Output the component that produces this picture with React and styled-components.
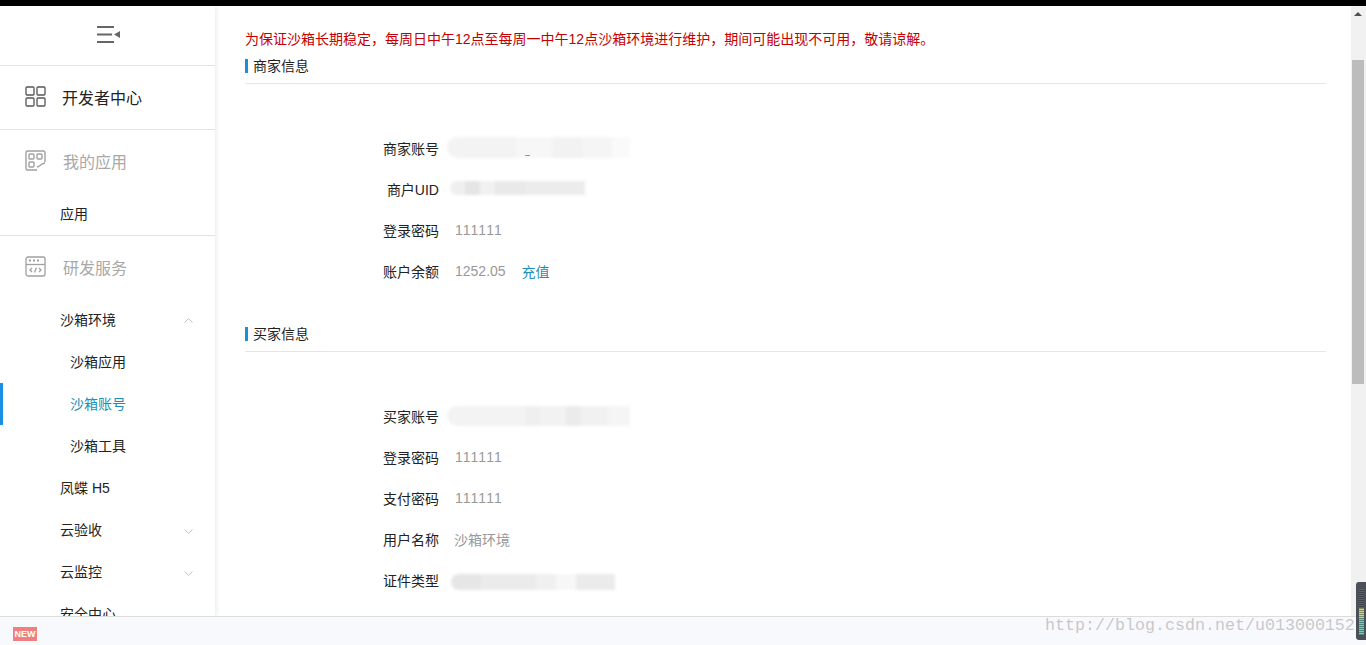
import styled, { createGlobalStyle } from 'styled-components';

const GlobalStyle = createGlobalStyle`
    html, body {
        margin: 0;
        padding: 0;
        background: #fff;
        overflow: hidden;
    }
    * {
        box-sizing: border-box;
    }
`;

const Page = styled.div`
    position: relative;
    display: flex;
    flex-direction: column;
    width: 1366px;
    height: 645px;
    overflow: hidden;
    font-family: 'Liberation Sans', 'Noto Sans CJK SC', sans-serif;
    font-size: 14px;
    font-kerning: none;
    color: #222;
`;

const TopBar = styled.div`
    flex: none;
    height: 6px;
    background: #000;
`;

const Body = styled.div`
    flex: 1;
    display: flex;
    min-height: 0;
`;

const Sidebar = styled.aside`
    flex: none;
    width: 215px;
    overflow: hidden;
    background: #fff;
    box-shadow: 2px 0 4px rgba(0, 0, 0, 0.07);
`;

const Collapse = styled.div`
    display: flex;
    align-items: center;
    justify-content: center;
    height: 60px;
    padding: 0 0 2px 2px;
    border-bottom: 1px solid #e2e2e2;
`;

const GroupHead = styled.div`
    display: flex;
    align-items: center;
    gap: ${(props) => (props.$dark ? '16px' : '17px')};
    height: ${(props) => (props.$dark ? '64px' : '63px')};
    padding: 0 0 2px 25px;
    font-size: 16px;
    color: ${(props) => (props.$dark ? '#222' : '#a8a8a8')};
    border-bottom: ${(props) => (props.$line ? '1px solid #e2e2e2' : 'none')};
`;

const NavItem = styled.div`
    position: relative;
    display: flex;
    align-items: center;
    justify-content: space-between;
    height: 42px;
    padding: 0 22px 2px ${(props) => (props.$sub ? '70px' : '60px')};
    color: ${(props) => (props.$active ? '#1b8fb8' : '#222')};
    ${(props) => props.$active && 'box-shadow: inset 3px 0 0 #1a8fe3;'}
    ${(props) => props.$line && 'height: 43px; padding-bottom: 3px; border-bottom: 1px solid #e2e2e2;'}
`;

const Main = styled.main`
    flex: 1;
    min-width: 0;
    overflow: hidden;
    padding: 23px 25px 0 30px;
`;

const Notice = styled.div`
    height: 20px;
    line-height: 20px;
    color: #c40000;
    white-space: nowrap;
`;

const SectionTitle = styled.div`
    margin-top: ${(props) => props.$top};
    height: 28px;
    border-bottom: 1px solid #e6e6e6;
`;

const TitleText = styled.span`
    display: block;
    height: 14px;
    margin-top: 3px;
    padding-left: 5px;
    line-height: 14px;
    border-left: 3px solid #1a8fd6;
    position: relative;
    top: 3px;
`;

const Rows = styled.div`
    margin-top: 43px;
`;

const Row = styled.div`
    position: relative;
    display: flex;
    align-items: center;
    height: 41px;
`;

const Label = styled.div`
    flex: none;
    width: 194px;
    text-align: right;
    color: #222;
`;

const Value = styled.div`
    margin-left: ${(props) => props.$left || '16px'};
    color: #999;
`;

const Recharge = styled.span`
    margin-left: 16px;
    color: #1b8fb8;
`;

const Smudge = styled.div`
    display: flex;
    height: ${(props) => props.$h}px;
    margin-left: ${(props) => props.$left}px;
    margin-bottom: ${(props) => props.$up}px;
    border-radius: 10px 0 0 10px;
    overflow: hidden;
    filter: blur(1.5px);
`;

const SmudgeCell = styled.div`
    width: ${(props) => props.$w}px;
    background: ${(props) => props.$c};
`;

// leftover speck of the account name under the blur
const Speck = styled.span`
    position: absolute;
    left: 280px;
    top: 28px;
    width: 5px;
    height: 1px;
    background: #999;
`;

const Scrollbar = styled.div`
    flex: none;
    width: 15px;
    padding: 54px 2px 0 1px;
    background: #f1f1f1;
`;

const ScrollArrow = styled.div`
    position: absolute;
    top: 12px;
    right: 4px;
    width: 0;
    height: 0;
    border-left: 4px solid transparent;
    border-right: 4px solid transparent;
    border-bottom: 4px solid #505050;
`;

const ScrollThumb = styled.div`
    height: 324px;
    background: #bcbcbc;
`;

const BottomBar = styled.div`
    flex: none;
    display: flex;
    align-items: center;
    height: 29px;
    padding: 5px 0 0 13px;
    background: #f8f9fd;
    border-top: 1px solid #dcdcdc;
`;

const NewBadge = styled.span`
    width: 24px;
    height: 14px;
    line-height: 14px;
    text-align: center;
    font-size: 9px;
    font-weight: 700;
    color: #fff;
    background: #f08080;
`;

const Watermark = styled.div`
    position: absolute;
    left: 1045px;
    top: 615px;
    font-family: 'Liberation Mono', monospace;
    font-size: 16.67px;
    line-height: 22px;
    color: rgba(150, 150, 150, 0.5);
    white-space: nowrap;
`;

const Meter = styled.div`
    position: absolute;
    right: 0;
    top: 582px;
    width: 10px;
    height: 58px;
    padding: 7px 0 0 3px;
    background: #4b5058;
    border-radius: 3px 0 0 3px;
`;

const MeterBars = styled.div`
    width: 5px;
    height: 46px;
    background: repeating-linear-gradient(to bottom, transparent 0 1px, rgba(0, 0, 0, 0.35) 1px 2px),
        linear-gradient(to bottom, #5e636b 0 42%, #c9d68a 42% 62%, #6fd0c0 62% 100%);
`;

const ChevronSvg = styled.svg`
    margin-top: ${(props) => (props.$up ? '2px' : '4px')};
`;

const MenuIcon = () => (
    <svg width="24" height="17" viewBox="0 0 24 17" fill="none" stroke="#666" strokeWidth="1.8">
        <path d="M0 1h17M0 8.5h15M0 16h17" />
        <path d="M17 8.5l6-3.5v7z" fill="#666" stroke="none" />
    </svg>
);

const GridIcon = () => (
    <svg width="21" height="21" viewBox="0 0 21 21" fill="none" stroke="#555" strokeWidth="1.3">
        <rect x="1" y="1" width="8" height="8" rx="1" />
        <rect x="12" y="1" width="8" height="8" rx="1" />
        <rect x="1" y="12" width="8" height="8" rx="1" />
        <rect x="12" y="12" width="8" height="8" rx="1" />
    </svg>
);

const AppsIcon = () => (
    <svg width="21" height="21" viewBox="0 0 21 21" fill="none" stroke="#a0a0a0" strokeWidth="1.4">
        <path d="M20 12V2.5A1.5 1.5 0 0 0 18.500 1h-16A1.500 1.500 0 0 0 1 2.500v16A1.500 1.500 0 0 0 2.500 20H12" />
        <rect x="4" y="4" width="5" height="5" rx="1" />
        <rect x="12" y="4" width="5" height="5" rx="1" />
        <rect x="4" y="12" width="5" height="5" rx="1" />
        <path d="M12 17c3 0 3-3 8-4" />
    </svg>
);

const DevIcon = () => (
    <svg width="21" height="21" viewBox="0 0 21 21" fill="none" stroke="#a0a0a0" strokeWidth="1.3">
        <rect x="1" y="1" width="19" height="19" rx="2" />
        <path d="M1 8.500h19" />
        <path d="M4 4.500h2M8 4.500h2M12 4.500h2" strokeWidth="1.800" />
        <path d="M7 12l-2 2 2 2M14 12l2 2-2 2M11.500 11.500l-2 5" />
    </svg>
);

const Chevron = ({ up }) => (
    <ChevronSvg $up={up} width="9" height="5" viewBox="0 0 9 5" fill="none" stroke="#c0c0c0" strokeWidth="1">
        <path d={up ? 'M0.500 4.500L4.500 0.700L8.500 4.500' : 'M0.500 0.500L4.500 4.300L8.500 0.500'} />
    </ChevronSvg>
);

const SmudgeBar = ({ left, up, h, cells }) => (
    <Smudge $left={left} $up={up} $h={h}>
        {cells.map((c, i) => (
            <SmudgeCell key={i} $w={c[0]} $c={c[1]} />
        ))}
    </Smudge>
);

const App = () => {
    return (
        <>
            <GlobalStyle />
            <Page>
                <TopBar />
                <Body>
                    {/* SIDEBAR */}
                    <Sidebar>
                        <Collapse>
                            <MenuIcon />
                        </Collapse>
                        <GroupHead $dark $line>
                            <GridIcon />
                            开发者中心
                        </GroupHead>
                        <GroupHead>
                            <AppsIcon />
                            我的应用
                        </GroupHead>
                        <NavItem $line>应用</NavItem>
                        <GroupHead>
                            <DevIcon />
                            研发服务
                        </GroupHead>
                        <NavItem>
                            沙箱环境
                            <Chevron up />
                        </NavItem>
                        <NavItem $sub>沙箱应用</NavItem>
                        <NavItem $sub $active>
                            沙箱账号
                        </NavItem>
                        <NavItem $sub>沙箱工具</NavItem>
                        <NavItem>凤蝶 H5</NavItem>
                        <NavItem>
                            云验收
                            <Chevron />
                        </NavItem>
                        <NavItem>
                            云监控
                            <Chevron />
                        </NavItem>
                        <NavItem>安全中心</NavItem>
                    </Sidebar>

                    {/* CONTENT */}
                    <Main>
                        <Notice>
                            为保证沙箱长期稳定，每周日中午12点至每周一中午12点沙箱环境进行维护，期间可能出现不可用，敬请谅解。
                        </Notice>
                        <SectionTitle $top="7px">
                            <TitleText>商家信息</TitleText>
                        </SectionTitle>
                        <Rows>
                            <Row>
                                <Label>商家账号</Label>
                                <SmudgeBar
                                    left={8}
                                    up={0}
                                    h={21}
                                    cells={[
                                        [70, '#f3f3f3'],
                                        [35, '#f7f7f7'],
                                        [30, '#f2f2f2'],
                                        [30, '#f5f5f5'],
                                        [18, '#fafafa'],
                                    ]}
                                />
                                <Speck />
                            </Row>
                            <Row>
                                <Label>商户UID</Label>
                                <SmudgeBar
                                    left={11}
                                    up={2}
                                    h={14}
                                    cells={[
                                        [15, '#efefef'],
                                        [15, '#e5e5e5'],
                                        [15, '#f1f1f1'],
                                        [30, '#e9e9e9'],
                                        [60, '#ececec'],
                                    ]}
                                />
                            </Row>
                            <Row>
                                <Label>登录密码</Label>
                                <Value>111111</Value>
                            </Row>
                            <Row>
                                <Label>账户余额</Label>
                                <Value>1252.05</Value>
                                <Recharge>充值</Recharge>
                            </Row>
                        </Rows>

                        <SectionTitle $top="33px">
                            <TitleText>买家信息</TitleText>
                        </SectionTitle>
                        <Rows>
                            <Row>
                                <Label>买家账号</Label>
                                <SmudgeBar
                                    left={8}
                                    up={0}
                                    h={20}
                                    cells={[
                                        [78, '#f3f3f3'],
                                        [15, '#efefef'],
                                        [26, '#f2f2f2'],
                                        [15, '#ebebeb'],
                                        [27, '#f1f1f1'],
                                        [22, '#f5f5f5'],
                                    ]}
                                />
                            </Row>
                            <Row>
                                <Label>登录密码</Label>
                                <Value>111111</Value>
                            </Row>
                            <Row>
                                <Label>支付密码</Label>
                                <Value>111111</Value>
                            </Row>
                            <Row>
                                <Label>用户名称</Label>
                                <Value $left="15px">沙箱环境</Value>
                            </Row>
                            <Row>
                                <Label>证件类型</Label>
                                <SmudgeBar
                                    left={12}
                                    up={-4}
                                    h={16}
                                    cells={[
                                        [30, '#e6e6e6'],
                                        [55, '#ebebeb'],
                                        [20, '#f0f0f0'],
                                        [20, '#f7f7f7'],
                                        [39, '#ebebeb'],
                                    ]}
                                />
                            </Row>
                        </Rows>
                    </Main>

                    <Scrollbar>
                        <ScrollArrow />
                        <ScrollThumb />
                    </Scrollbar>
                </Body>
                <BottomBar>
                    <NewBadge>NEW</NewBadge>
                </BottomBar>
                <Watermark>http://blog.csdn.net/u013000152</Watermark>
                <Meter>
                    <MeterBars />
                </Meter>
            </Page>
        </>
    );
};

export default App;
